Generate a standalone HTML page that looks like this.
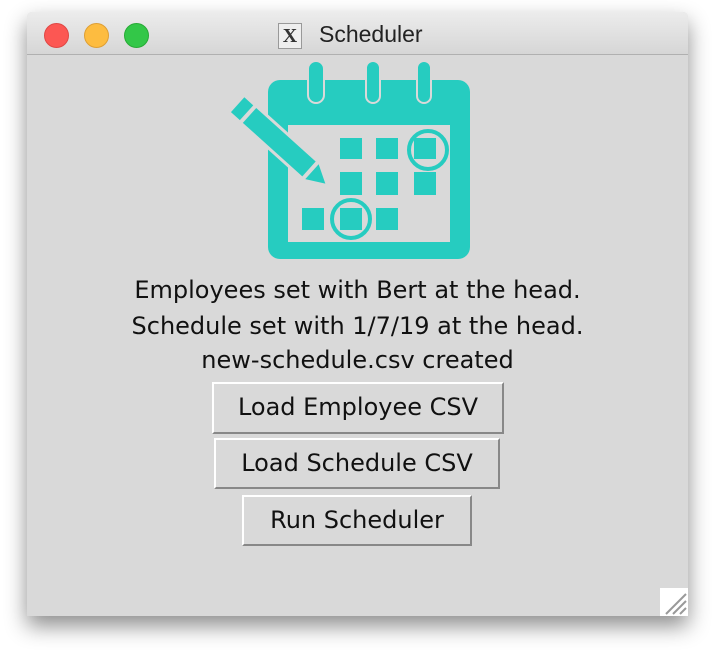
<!DOCTYPE html><html><head><style>
body{margin:0;width:716px;height:660px;background:#fff;position:relative;overflow:hidden;font-family:"DejaVu Sans",sans-serif}
.win{position:absolute;left:27px;top:12px;width:661px;height:604px;background:#d9d9d9;box-shadow:0 10px 22px rgba(0,0,0,.45);border-radius:5px 5px 0 0;overflow:hidden}
.tb{position:absolute;left:0;top:0;width:100%;height:42px;background:linear-gradient(#ececec,#d6d6d6);border-bottom:1px solid #b0b0b0}
.dot{position:absolute;top:11px;width:23px;height:23px;border-radius:50%}
.t{position:absolute;left:0;width:100%;text-align:center;font-size:24px;color:#111;line-height:30px}
.b{position:absolute;box-sizing:border-box;border:2px solid;border-color:#fff #888 #888 #fff;background:#d9d9d9;font-size:24px;text-align:center;line-height:46px;color:#111}
</style></head><body>
<div class="win">
<div class="tb">
<div class="dot" style="left:17px;background:#fc5753;border:1px solid #df4744"></div>
<div class="dot" style="left:57px;background:#fdbc40;border:1px solid #de9f34"></div>
<div class="dot" style="left:97px;background:#33c748;border:1px solid #27aa35"></div>
<div style="position:absolute;left:251px;top:11px;width:22px;height:24px;border:1px solid #999;background:#eee;font:bold 20px 'Liberation Serif',serif;text-align:center;line-height:24px;color:#333">X</div>
<div style="position:absolute;left:292px;top:9px;font:23px 'Liberation Sans',sans-serif;color:#222">Scheduler</div>
</div>
<svg style="position:absolute;left:-27px;top:-12px" width="716" height="660">
<g fill="#26ccc0">
<rect x="268" y="80" width="202" height="179" rx="12"/>
</g>
<g fill="#26ccc0" stroke="#d9d9d9" stroke-width="2">
<rect x="308" y="61" width="16" height="42" rx="8"/><rect x="366" y="61" width="14" height="42" rx="7"/><rect x="417" y="61" width="14" height="42" rx="7"/>
</g>
<rect x="288" y="125" width="162" height="117" fill="#d9d9d9"/>
<g fill="#26ccc0">
<rect x="340" y="138" width="22" height="21"/><rect x="376" y="138" width="22" height="21"/><rect x="414" y="138" width="22" height="21"/>
<rect x="340" y="172" width="22" height="23"/><rect x="376" y="172" width="22" height="23"/><rect x="414" y="172" width="22" height="23"/>
<rect x="302" y="208" width="22" height="22"/><rect x="340" y="208" width="22" height="22"/><rect x="376" y="208" width="22" height="22"/>
</g>
<g fill="none" stroke="#26ccc0" stroke-width="4"><circle cx="428" cy="150" r="19"/><circle cx="351" cy="219" r="19"/></g>
<g transform="rotate(42 245 110)"><rect x="232" y="98" width="124" height="26" fill="#d9d9d9"/><rect x="236" y="101" width="12" height="20" fill="#26ccc0"/><rect x="252" y="101" width="80" height="20" fill="#26ccc0"/><path d="M336 101 L354 111 L336 121Z" fill="#26ccc0"/></g>
</svg>
<div class="t" style="top:263px">Employees set with Bert at the head.</div>
<div class="t" style="top:299px">Schedule set with 1/7/19 at the head.</div>
<div class="t" style="top:333px">new-schedule.csv created</div>
<div class="b" style="left:185px;top:370px;width:292px;height:52px">Load Employee CSV</div>
<div class="b" style="left:187px;top:426px;width:286px;height:51px">Load Schedule CSV</div>
<div class="b" style="left:215px;top:483px;width:230px;height:51px">Run Scheduler</div>
<div style="position:absolute;right:0;bottom:0;width:28px;height:28px;background:#fff"><svg width="28" height="28"><g stroke="#999" stroke-width="2"><path d="M6 26L26 6M13 26L26 13M20 26L26 20"/></g></svg></div>
</div>
</body></html>
